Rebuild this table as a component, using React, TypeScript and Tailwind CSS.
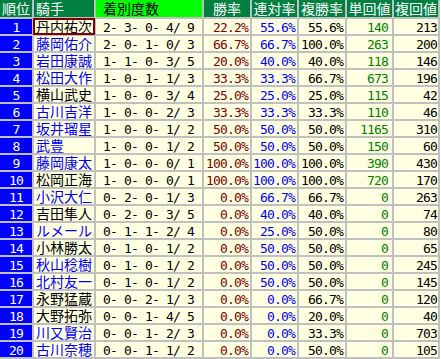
import React from "react";

type Row = [number, string, boolean, string, string, string, string, string, string];

const rows: Row[] = [
  [1, "丹内祐次", false, "2- 3- 0- 4/ 9", "22.2%", "55.6%", "55.6%", "140", "213"],
  [2, "藤岡佑介", true, "2- 0- 1- 0/ 3", "66.7%", "66.7%", "100.0%", "263", "200"],
  [3, "岩田康誠", true, "1- 1- 0- 3/ 5", "20.0%", "40.0%", "40.0%", "118", "146"],
  [4, "松田大作", true, "1- 0- 1- 1/ 3", "33.3%", "33.3%", "66.7%", "673", "196"],
  [5, "横山武史", false, "1- 0- 0- 3/ 4", "25.0%", "25.0%", "25.0%", "115", "42"],
  [6, "古川吉洋", true, "1- 0- 0- 2/ 3", "33.3%", "33.3%", "33.3%", "110", "46"],
  [7, "坂井瑠星", true, "1- 0- 0- 1/ 2", "50.0%", "50.0%", "50.0%", "1165", "310"],
  [8, "武豊", true, "1- 0- 0- 1/ 2", "50.0%", "50.0%", "50.0%", "150", "60"],
  [9, "藤岡康太", true, "1- 0- 0- 0/ 1", "100.0%", "100.0%", "100.0%", "390", "430"],
  [10, "松岡正海", false, "1- 0- 0- 0/ 1", "100.0%", "100.0%", "100.0%", "720", "170"],
  [11, "小沢大仁", true, "0- 2- 0- 1/ 3", "0.0%", "66.7%", "66.7%", "0", "263"],
  [12, "吉田隼人", false, "0- 2- 0- 3/ 5", "0.0%", "40.0%", "40.0%", "0", "74"],
  [13, "ルメール", true, "0- 1- 1- 2/ 4", "0.0%", "25.0%", "50.0%", "0", "80"],
  [14, "小林勝太", false, "0- 1- 0- 1/ 2", "0.0%", "50.0%", "50.0%", "0", "65"],
  [15, "秋山稔樹", true, "0- 1- 0- 1/ 2", "0.0%", "50.0%", "50.0%", "0", "245"],
  [16, "北村友一", true, "0- 1- 0- 1/ 2", "0.0%", "50.0%", "50.0%", "0", "145"],
  [17, "永野猛蔵", false, "0- 0- 2- 1/ 3", "0.0%", "0.0%", "66.7%", "0", "120"],
  [18, "大野拓弥", false, "0- 0- 1- 4/ 5", "0.0%", "0.0%", "20.0%", "0", "40"],
  [19, "川又賢治", true, "0- 0- 1- 2/ 3", "0.0%", "0.0%", "33.3%", "0", "703"],
  [20, "古川奈穂", true, "0- 0- 1- 1/ 2", "0.0%", "0.0%", "50.0%", "0", "105"],
];

const jp = "font-['Noto_Sans_CJK_JP',sans-serif]";
const mono = "font-['DejaVu_Sans_Mono',monospace] text-[13px] tracking-[-0.83px]";

export default function App() {
  return (
    <div className="bg-white w-[441px] h-[359px]">
      <div className="grid w-[440px] grid-cols-[32px_60px_106px_46px_45px_46px_45px_44px] gap-[2px] bg-[#c0c0c0] pr-[2px] pb-[2px]">
        <div className={`${jp} h-[17px] bg-[#008040] text-white text-[14px] leading-[17px] text-center whitespace-nowrap`}>順位</div>
        <div className={`${jp} h-[17px] bg-[#008040] text-white text-[14px] leading-[17px] pl-[2px] whitespace-nowrap`}>騎手</div>
        <div className={`${jp} h-[17px] bg-[#00ff00] text-black text-[14px] leading-[17px] pl-[7px] whitespace-nowrap`}>着別度数</div>
        <div className={`${jp} h-[17px] bg-[#008040] text-white text-[14px] leading-[17px] text-center whitespace-nowrap`}>勝率</div>
        <div className={`${jp} h-[17px] bg-[#008040] text-white text-[14px] leading-[17px] text-center whitespace-nowrap overflow-visible`}>連対率</div>
        <div className={`${jp} h-[17px] bg-[#008040] text-white text-[14px] leading-[17px] text-center whitespace-nowrap`}>複勝率</div>
        <div className={`${jp} h-[17px] bg-[#008040] text-white text-[14px] leading-[17px] text-center whitespace-nowrap`}>単回値</div>
        <div className={`${jp} h-[17px] bg-[#008040] text-white text-[14px] leading-[17px] text-center whitespace-nowrap`}>複回値</div>
        {rows.map((r) => (
          <React.Fragment key={r[0]}>
            <div className={`${mono} h-[15px] leading-[17px] bg-[#0000ff] text-white text-center`}>{r[0]}</div>
            <div
              className={`${jp} h-[15px] leading-[15px] text-[14px] bg-[#ffffe1] pl-[2px] whitespace-nowrap ${
                r[2] ? "text-[#0000ff]" : "text-black"
              } ${r[0] === 1 ? "outline-2 outline-solid outline-[#800000] -outline-offset-1" : ""}`}
            >
              {r[1]}
            </div>
            <div className={`${mono} h-[15px] leading-[17px] bg-[#ffffe1] text-black pl-[7px] whitespace-pre`}>{r[3]}</div>
            <div className={`${mono} h-[15px] leading-[17px] bg-[#ffffe1] text-[#800000] text-right pr-[2px] whitespace-pre`}>{r[4]}</div>
            <div className={`${mono} h-[15px] leading-[17px] bg-[#ffffe1] text-[#0000ff] text-right pr-[2px] whitespace-pre`}>{r[5]}</div>
            <div className={`${mono} h-[15px] leading-[17px] bg-[#ffffe1] text-black text-right pr-[2px] whitespace-pre`}>{r[6]}</div>
            <div className={`${mono} h-[15px] leading-[17px] bg-[#ffffe1] text-[#008000] text-right pr-[4px] whitespace-pre`}>{r[7]}</div>
            <div className={`${mono} h-[15px] leading-[17px] bg-[#ffffe1] text-black text-right pr-[1px] whitespace-pre`}>{r[8]}</div>
          </React.Fragment>
        ))}
      </div>
    </div>
  );
}
